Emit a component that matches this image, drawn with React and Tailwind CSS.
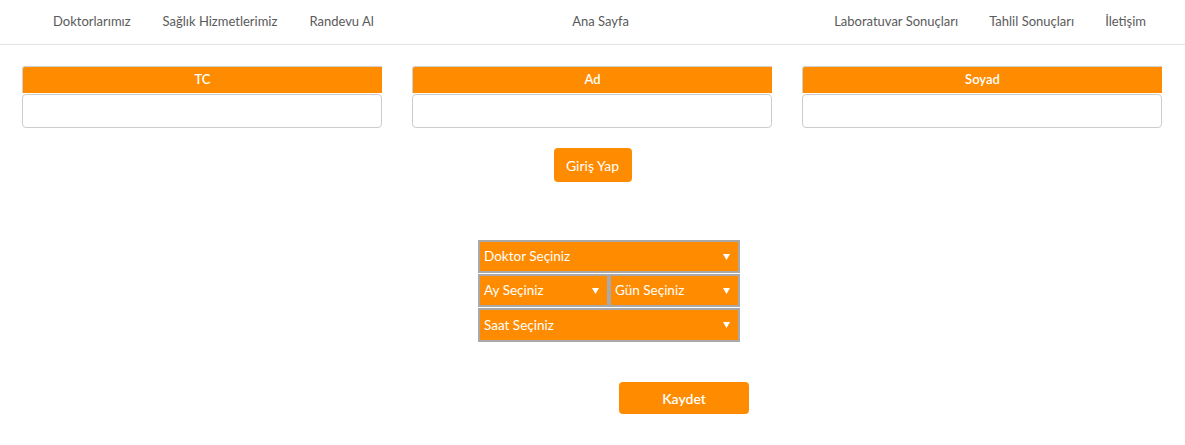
import React from "react";

const font = { fontFamily: "Lato, 'Open Sans', sans-serif" };

function Field({ label }) {
  return (
    <div className="flex flex-col">
      <div className="h-[27px] bg-[#ff8c00] border-t border-l border-[#cfcfcf] rounded-tl-[3px] flex items-center justify-center text-white text-[13px] font-semibold">
        {label}
      </div>
      <div className="mt-[1px] h-[34px] border border-[#cccccc] rounded-[4px] bg-white"></div>
    </div>
  );
}

function Select({ label, className = "" }) {
  return (
    <div
      className={
        "h-[33px] bg-[#ff8c00] border-2 border-[#a9a9a9] flex items-center justify-between pl-[4px] pr-[8px] text-white text-[13.5px] " +
        className
      }
    >
      <span>{label}</span>
      <svg width="7" height="6" viewBox="0 0 7 6">
        <path d="M0 0 H7 L3.5 6 Z" fill="#ffffff" />
      </svg>
    </div>
  );
}

export default function App() {
  return (
    <div className="w-[1185px] h-[445px] bg-white text-[#555]" style={font}>
      <nav className="h-[45px] border-b border-[#e3e3e3] flex items-center text-[13px] text-[#5a5a5a]">
        <div className="flex-1 flex gap-[32px] pl-[53px]">
          <span>Doktorlarımız</span>
          <span>Sağlık Hizmetlerimiz</span>
          <span>Randevu Al</span>
        </div>
        <div className="pl-[2px]">Ana Sayfa</div>
        <div className="flex-1 flex justify-end gap-[31px] pr-[39px]">
          <span>Laboratuvar Sonuçları</span>
          <span>Tahlil Sonuçları</span>
          <span>İletişim</span>
        </div>
      </nav>

      <div className="grid grid-cols-3 gap-[30px] pl-[22px] pr-[23px] pt-[21px]">
        <Field label="TC" />
        <Field label="Ad" />
        <Field label="Soyad" />
      </div>

      <div className="flex justify-center mt-[20px]">
        <button className="w-[78px] h-[34px] bg-[#ff8c00] rounded-[4px] text-white text-[14px]">
          Giriş Yap
        </button>
      </div>

      <div className="ml-[478px] w-[262px] mt-[58px] flex flex-col gap-[1px]">
        <Select label="Doktor Seçiniz" />
        <div className="flex">
          <Select label="Ay Seçiniz" className="w-[131px]" />
          <Select label="Gün Seçiniz" className="w-[131px]" />
        </div>
        <Select label="Saat Seçiniz" className="h-[34px]" />
      </div>

      <button className="ml-[619px] mt-[40px] w-[130px] h-[32px] bg-[#ff8c00] rounded-[4px] text-white text-[14px] font-semibold">
        Kaydet
      </button>
    </div>
  );
}
